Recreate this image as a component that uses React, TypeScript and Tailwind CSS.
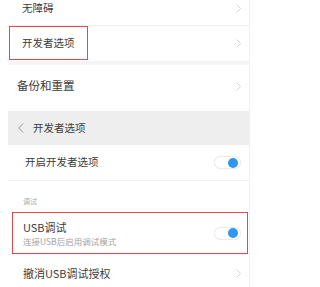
import React from 'react';

const font = { fontFamily: '"Noto Sans CJK SC", "Noto Sans", sans-serif' };

function Chevron() {
  return (
    <svg width="5" height="9" viewBox="0 0 5 9" className="shrink-0">
      <polyline points="0.5,0.5 4.5,4.5 0.5,8.5" fill="none" stroke="#cfcfcf" strokeWidth="0.9" />
    </svg>
  );
}

function Toggle() {
  return (
    <div className="w-[27px] h-[13px] rounded-full bg-white border border-[#ececec] shadow-[0_0_1px_rgba(0,0,0,0.08)] flex items-center justify-end pr-[2px]">
      <span className="w-[10px] h-[10px] rounded-full bg-[#2f96f1]" />
    </div>
  );
}

export default function App() {
  return (
    <div className="w-[257px] h-[287px] bg-white overflow-hidden text-[#3c3c3c]" style={font}>
      <div className="ml-[8px] w-[242px] border-r border-[#f1f1f1]">
        {/* first screen */}
        <div className="h-[26px] pb-[9px] pl-[14px] pr-[8px] flex items-center justify-between border-b border-[#f0f0f0]">
          <span className="text-[10.5px] leading-none">无障碍</span>
          <Chevron />
        </div>
        <div className="relative h-[35px] pl-[14px] pr-[8px] flex items-center justify-between">
          <span className="text-[10.5px] leading-none">开发者选项</span>
          <Chevron />
          <span className="absolute left-[1px] top-0 w-[79px] h-[34px] border-[1.5px] border-[#e2484d]" />
        </div>
        <div className="h-[4px] bg-[#f5f5f5]" />
        <div className="h-[42px] pl-[9px] pr-[8px] flex items-center justify-between">
          <span className="text-[11.5px] leading-none">备份和重置</span>
          <Chevron />
        </div>
        <div className="h-[4px]" />

        {/* second screen */}
        <div className="h-[34px] bg-[#eeeeee] pl-[10px] flex items-center gap-[9px]">
          <svg width="6" height="10" viewBox="0 0 6 10">
            <polyline points="5,0.5 0.8,5 5,9.5" fill="none" stroke="#8a8a8a" strokeWidth="0.9" />
          </svg>
          <span className="text-[10.5px] leading-none">开发者选项</span>
        </div>
        <div className="h-[36px] pl-[17px] pr-[8px] flex items-center justify-between border-b border-[#f0f0f0]">
          <span className="text-[10.5px] leading-none">开启开发者选项</span>
          <Toggle />
        </div>
        <div className="h-[31px] pt-[16px] pl-[15px]">
          <span className="block text-[7px] leading-[8px] text-[#aaaaaa]">调试</span>
        </div>
        <div className="relative h-[42px] pl-[15px] pr-[8px] flex items-center justify-between">
          <div className="flex flex-col gap-[2px] pt-[1px]">
            <span className="text-[11px] leading-[13px]">USB调试</span>
            <span className="text-[8.5px] leading-[10px] text-[#a3a3a3]">连接USB后启用调试模式</span>
          </div>
          <Toggle />
          <span className="absolute left-[4px] top-0 w-[236px] h-[42px] border-[1.5px] border-[#e2484d]" />
        </div>
        <div className="h-[38px] pl-[15px] pr-[8px] flex items-center justify-between border-t border-[#f3f3f3]">
          <span className="text-[11px] leading-none">撤消USB调试授权</span>
          <Chevron />
        </div>
      </div>
    </div>
  );
}
